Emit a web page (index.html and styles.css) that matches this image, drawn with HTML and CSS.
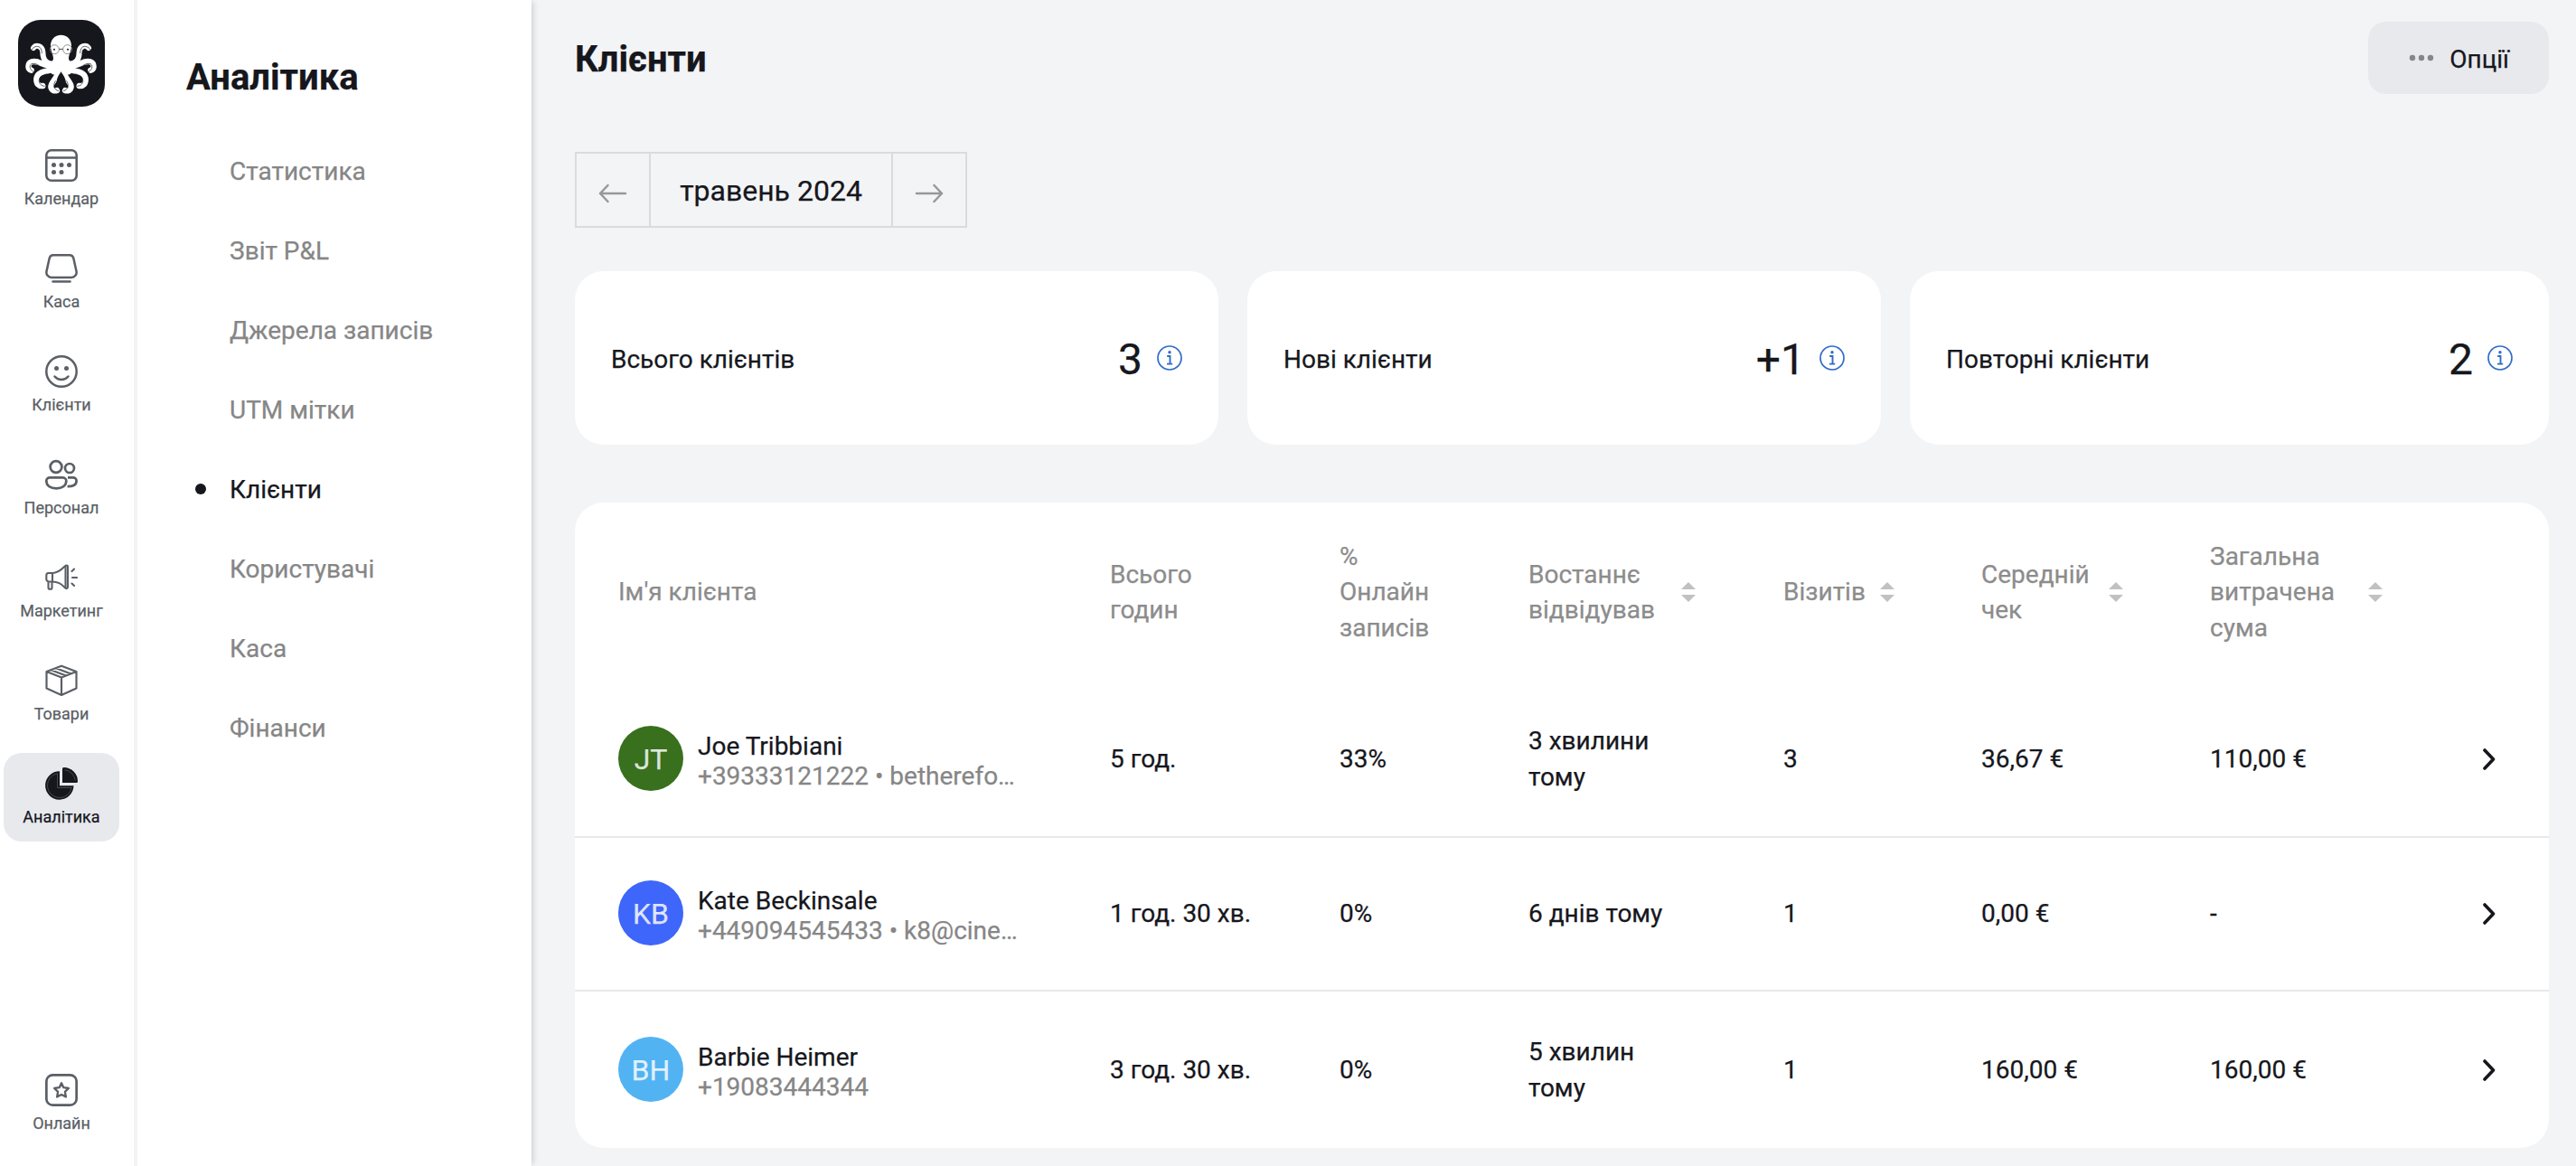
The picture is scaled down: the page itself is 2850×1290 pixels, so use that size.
FILE: index.html
```html
<!DOCTYPE html>
<html lang="uk">
<head>
    <meta charset="UTF-8">
    <meta name="viewport" content="width=device-width, initial-scale=1.0">
    <title>Клієнти - Аналітика</title>
    <link rel="stylesheet" href="styles.css">
</head>
<body>
    <svg class="sprite" aria-hidden="true">
        <symbol id="icon-sort" viewBox="0 0 16 22">
            <path d="M8 0l8 8H0zM8 22l8-8H0z" fill="currentColor"/>
        </symbol>
        <symbol id="icon-info" viewBox="0 0 28 28">
            <circle cx="14" cy="14" r="13" fill="none" stroke="currentColor" stroke-width="1.7"/>
            <circle cx="14" cy="7.8" r="1.7" fill="currentColor"/>
            <path d="M11.2 12h3.3v8.4M11 20.6h6.2" fill="none" stroke="currentColor" stroke-width="1.9"/>
        </symbol>
        <symbol id="icon-chevron" viewBox="0 0 14 24">
            <path d="M2 2l9.5 10L2 22" fill="none" stroke="currentColor" stroke-width="3.6" stroke-linecap="round" stroke-linejoin="round"/>
        </symbol>
        <symbol id="octopus-arms" viewBox="18 18 288 288">
            <g fill="none" stroke="#fff" stroke-width="19" stroke-linecap="round">
                <path d="M140 164C104 166 100 142 100 124C98 104 78 99 69 111" stroke-width="18"/>
                <path d="M140 172C100 174 88 150 64 157C48 163 49 181 62 185"/>
                <path d="M140 182C112 190 84 188 79 212C77 230 87 239 100 237"/>
                <path d="M152 186C150 212 128 222 127 240C128 253 140 255 147 252"/>
            </g>
            <g fill="none" stroke="#16171d" stroke-width="2" stroke-linecap="round">
                <path d="M62 118C70 104 88 102 93 113C96 118 97 124 97 128"/>
                <path d="M68 190C54 180 54 166 66 163C74 162 82 166 88 170"/>
                <path d="M106 238C86 236 84 218 92 208C98 202 106 200 112 198"/>
                <path d="M152 254C134 248 134 232 142 221"/>
            </g>
        </symbol>
    </svg>

    <div class="app">
        <aside class="rail">
            <svg class="logo" viewBox="18 18 288 288">
                <rect x="18" y="18" width="288" height="288" rx="74" fill="#16171d"/>
                <use href="#octopus-arms" x="18" y="18" width="288" height="288"/>
                <use href="#octopus-arms" x="18" y="18" width="288" height="288" transform="matrix(-1 0 0 1 321 0)"/>
                <path d="M160.500 68C182 68 195 84 195 104C195 122 186 132 186 146C187 156 198 160 204 164L192 198L174 202L160.500 189L147 202L130 198L118 164C124 160 134 156 135 146C135 132 126 122 126 104C126 84 139 68 160.500 68Z" fill="#fff"/>
                <path d="M160.500 190C150 206 146 214 146 224L156 250H165L176 224C176 214 171 206 160.500 190Z" fill="#16171d"/>
                <g fill="none" stroke="#16171d" stroke-width="2.4">
                    <circle cx="139" cy="116" r="15" stroke="#777"/>
                    <circle cx="182" cy="116" r="15" stroke="#777"/>
                    <path d="M154 115h13"/>
                </g>
                <circle cx="138" cy="116" r="3" fill="#16171d"/>
                <circle cx="183" cy="116" r="3" fill="#16171d"/>
            </svg>

            <nav class="rail-nav">
                <a class="rail-item">
                    <svg viewBox="0 0 36 36" fill="none" stroke="currentColor" stroke-width="2.6">
                        <rect x="1.3" y="1.3" width="33.4" height="33.4" rx="5.5"/>
                        <path d="M1.500 9.500h33"/>
                        <g fill="currentColor" stroke="none">
                            <circle cx="9.5" cy="17.5" r="2.5"/><circle cx="18" cy="17.5" r="2.5"/><circle cx="26.5" cy="17.5" r="2.5"/>
                            <circle cx="9.5" cy="25.5" r="2.5"/><circle cx="18" cy="25.5" r="2.5"/>
                        </g>
                    </svg>
                    <span>Календар</span>
                </a>
                <a class="rail-item">
                    <svg viewBox="0 0 36 36" fill="none" stroke="currentColor" stroke-width="2.5" stroke-linecap="round">
                        <path d="M9 3.300h18a4.500 4.500 0 0 1 4.300 3.300l3.200 14.500a5.600 5.600 0 0 1-5.400 6.900H6.900a5.600 5.600 0 0 1-5.400-6.900L4.700 6.600A4.500 4.500 0 0 1 9 3.300z"/>
                        <path d="M8.500 32.500h19"/>
                    </svg>
                    <span>Каса</span>
                </a>
                <a class="rail-item">
                    <svg viewBox="0 0 36 36" fill="none" stroke="currentColor" stroke-width="2.5" stroke-linecap="round">
                        <circle cx="18" cy="18" r="16.7"/>
                        <path d="M10.500 23.500c4 4.600 11 4.600 15 0"/>
                        <circle cx="12.5" cy="14.5" r="2.5" fill="currentColor" stroke="none"/>
                        <circle cx="23.5" cy="14.5" r="2.5" fill="currentColor" stroke="none"/>
                    </svg>
                    <span>Клієнти</span>
                </a>
                <a class="rail-item">
                    <svg viewBox="0 0 36 36" fill="none" stroke="currentColor" stroke-width="2.7">
                        <circle cx="12" cy="9.5" r="6.4"/>
                        <circle cx="27" cy="11" r="5"/>
                        <path d="M5.500 21.300h14a3.800 3.800 0 0 1 3.800 3.800c0 5.500-4.500 8.200-11 8.200s-11-2.700-11-8.200a3.800 3.800 0 0 1 4.200-3.800z"/>
                        <path d="M25 21.300h6a3.600 3.600 0 0 1 3.600 3.600c0 4.500-3.600 6.400-10 6.300"/>
                    </svg>
                    <span>Персонал</span>
                </a>
                <a class="rail-item">
                    <svg viewBox="0 0 36 36" fill="none" stroke="currentColor" stroke-width="2.1" stroke-linecap="round" stroke-linejoin="round">
                        <path d="M8 13H3.500A2.500 2.500 0 0 0 1.300 15.500v4A2.800 2.800 0 0 0 4 22.500h4c8 0 11.500 4 14 6.800c1.300 1.400 3 .8 3-1V6c0-1.700-1.700-2-3-.8C18 9.200 14 13 8 13zM8 13v9.500M3.500 22.500v6.700a1.500 1.500 0 0 0 1.500 1.500h1a1.500 1.500 0 0 0 1.500-1.500v-6.700"/>
                        <path d="M22.500 6v22.500"/>
                        <path d="M30 18h5M29.500 11l2.500-2.500M29.500 24.500l2.500 2.500"/>
                    </svg>
                    <span>Маркетинг</span>
                </a>
                <a class="rail-item">
                    <svg viewBox="0 0 36 36" fill="none" stroke="currentColor" stroke-width="2.2" stroke-linejoin="round">
                        <path d="M18 1.800L34.500 8v18.500L18 34L1.500 26.500V8zM1.500 8L18 14.500L34.500 8M18 14.500V34M12 4.200L28.500 10.500M6.500 6.200L23 12.500"/>
                    </svg>
                    <span>Товари</span>
                </a>
                <a class="rail-item active">
                    <svg viewBox="0 0 36 36" fill="currentColor">
                        <path d="M16 4.300v16h15.500A15.700 15.700 0 1 1 16 4.300z"/>
                        <path d="M19 1.500A1.500 1.500 0 0 1 20.500 0A15.500 15.500 0 0 1 36 15.500A1.500 1.500 0 0 1 34.500 17H19z"/>
                        <path d="M13.500 6.800v15.700h15.700M21.500 2.800a13 13 0 0 1 11.700 11.700M13.500 6.800A13.500 13.500 0 1 0 29.200 22.500" fill="none" stroke="#5b5d63" stroke-width="0.7"/>
                    </svg>
                    <span>Аналітика</span>
                </a>
            </nav>

            <a class="rail-item">
                <svg viewBox="0 0 36 36" fill="none" stroke="currentColor" stroke-width="2.7" stroke-linejoin="round">
                    <rect x="1.35" y="1.35" width="33.3" height="33.3" rx="7"/>
                    <path d="M18 10.300l2.300 4.900l5.600.8l-4 3.900l1 5.600L18 22.900l-4.900 2.600l1-5.600l-4-3.900l5.600-.8z" stroke-width="2.3"/>
                </svg>
                <span>Онлайн</span>
            </a>
        </aside>

        <aside class="sidebar">
            <h2>Аналітика</h2>
            <ul>
                <li>Статистика</li>
                <li>Звіт P&amp;L</li>
                <li>Джерела записів</li>
                <li>UTM мітки</li>
                <li class="active">Клієнти</li>
                <li>Користувачі</li>
                <li>Каса</li>
                <li>Фінанси</li>
            </ul>
        </aside>

        <main>
            <header class="page-header">
                <h1>Клієнти</h1>
                <button class="options">
                    <svg viewBox="0 0 30 8"><g fill="currentColor"><circle cx="5" cy="4" r="3.2"/><circle cx="15" cy="4" r="3.2"/><circle cx="25" cy="4" r="3.2"/></g></svg>
                    <span>Опції</span>
                </button>
            </header>

            <div class="month-picker">
                <button>
                    <svg viewBox="0 0 32 22"><path d="M30 11H2M10.500 2L2 11l8.500 9"/></svg>
                </button>
                <div class="month">травень 2024</div>
                <button>
                    <svg viewBox="0 0 32 22"><path d="M2 11h28M21.500 2L30 11l-8.500 9"/></svg>
                </button>
            </div>

            <section class="cards">
                <div class="card">
                    <span class="card-label">Всього клієнтів</span>
                    <span class="card-value">3</span>
                    <svg class="info"><use href="#icon-info"/></svg>
                </div>
                <div class="card">
                    <span class="card-label">Нові клієнти</span>
                    <span class="card-value">+1</span>
                    <svg class="info"><use href="#icon-info"/></svg>
                </div>
                <div class="card">
                    <span class="card-label">Повторні клієнти</span>
                    <span class="card-value">2</span>
                    <svg class="info"><use href="#icon-info"/></svg>
                </div>
            </section>

            <table class="clients">
                <colgroup>
                    <col class="col-name">
                    <col class="col-hours">
                    <col class="col-online">
                    <col class="col-last">
                    <col class="col-visits">
                    <col class="col-avg">
                    <col class="col-total">
                    <col>
                </colgroup>
                <thead>
                    <tr>
                        <th>Ім'я клієнта</th>
                        <th>Всього<br>годин</th>
                        <th>%<br>Онлайн<br>записів</th>
                        <th><div class="sortable sort-last"><span>Востаннє відвідував</span><svg class="sort"><use href="#icon-sort"/></svg></div></th>
                        <th><div class="sortable"><span>Візитів</span><svg class="sort"><use href="#icon-sort"/></svg></div></th>
                        <th><div class="sortable sort-avg"><span>Середній чек</span><svg class="sort"><use href="#icon-sort"/></svg></div></th>
                        <th><div class="sortable sort-total"><span>Загальна витрачена сума</span><svg class="sort"><use href="#icon-sort"/></svg></div></th>
                        <th></th>
                    </tr>
                </thead>
                <tbody>
                    <tr>
                        <td>
                            <div class="client">
                                <div class="avatar green">JT</div>
                                <div class="client-info">
                                    <div>Joe Tribbiani</div>
                                    <div class="contact">+39333121222 • betherefo…</div>
                                </div>
                            </div>
                        </td>
                        <td>5 год.</td>
                        <td>33%</td>
                        <td>3 хвилини<br>тому</td>
                        <td>3</td>
                        <td>36,67 €</td>
                        <td>110,00 €</td>
                        <td><svg class="chevron"><use href="#icon-chevron"/></svg></td>
                    </tr>
                    <tr>
                        <td>
                            <div class="client">
                                <div class="avatar blue">KB</div>
                                <div class="client-info">
                                    <div>Kate Beckinsale</div>
                                    <div class="contact">+449094545433 • k8@cine…</div>
                                </div>
                            </div>
                        </td>
                        <td>1 год. 30 хв.</td>
                        <td>0%</td>
                        <td>6 днів тому</td>
                        <td>1</td>
                        <td>0,00 €</td>
                        <td>-</td>
                        <td><svg class="chevron"><use href="#icon-chevron"/></svg></td>
                    </tr>
                    <tr>
                        <td>
                            <div class="client">
                                <div class="avatar sky">BH</div>
                                <div class="client-info">
                                    <div>Barbie Heimer</div>
                                    <div class="contact">+19083444344</div>
                                </div>
                            </div>
                        </td>
                        <td>3 год. 30 хв.</td>
                        <td>0%</td>
                        <td>5 хвилин<br>тому</td>
                        <td>1</td>
                        <td>160,00 €</td>
                        <td>160,00 €</td>
                        <td><svg class="chevron"><use href="#icon-chevron"/></svg></td>
                    </tr>
                </tbody>
            </table>
        </main>
    </div>
</body>
</html>
```

FILE: styles.css
```css
:root {
    --dark: #16171d;
    --icon: #5b5f66;
    --muted: #868686;
    --bg: #f3f4f6;
    --bg-active: #e8e9ed;
    --line: #dadbde;
}

* {
    box-sizing: border-box;
    margin: 0;
    padding: 0;
}

body {
    font-family: Roboto, sans-serif;
    font-size: 28px;
    line-height: 1.4;
    color: var(--dark);
    background: var(--bg);
    -webkit-text-stroke: 0.25px;
    overflow: hidden;
}

button {
    font: inherit;
    color: inherit;
    background: none;
    border: none;
}

.sprite {
    position: absolute;
    width: 0;
    height: 0;
}

.app {
    display: flex;
    height: 100vh;
}

/* Icon rail */
.rail {
    width: 152px;
    flex: none;
    display: flex;
    flex-direction: column;
    padding: 22px 0 20px 4px;
    background: #fff;
    border-right: 4px solid #f3f3f5;
}

.logo {
    width: 96px;
    height: 96px;
    margin: 0 0 31px 16px;
}

.rail-nav {
    display: flex;
    flex-direction: column;
    gap: 16px;
    flex: 1;
}

.rail-item {
    width: 128px;
    height: 98px;
    padding-top: 16px;
    display: flex;
    flex-direction: column;
    align-items: center;
    gap: 7px;
    border-radius: 20px;
    color: var(--icon);
    font-size: 18px;
    line-height: 24px;
}

.rail-item svg {
    width: 36px;
    height: 36px;
}

.rail-item.active {
    background: var(--bg-active);
    color: var(--dark);
}

/* Section menu */
.sidebar {
    width: 436px;
    flex: none;
    padding: 62px 0 0 54px;
    background: #fff;
    box-shadow: 4px 0 6px -2px rgba(22, 23, 29, 0.16);
}

.sidebar h2 {
    font-size: 40px;
    line-height: 48px;
    margin-bottom: 60px;
}

.sidebar ul {
    list-style: none;
    display: flex;
    flex-direction: column;
    gap: 48px;
}

.sidebar li {
    display: flex;
    align-items: center;
    line-height: 40px;
    padding-left: 48px;
    color: var(--muted);
}

.sidebar li.active {
    padding-left: 10px;
    color: var(--dark);
}

.sidebar li.active::before {
    content: '';
    width: 12px;
    height: 12px;
    margin: 0 26px 2px 0;
    border-radius: 50%;
    background: var(--dark);
}

/* Content */
main {
    flex: 1;
    padding: 24px 30px 0 48px;
}

.page-header {
    display: flex;
    justify-content: space-between;
    align-items: center;
    height: 80px;
    margin-bottom: 64px;
}

.page-header h1 {
    font-size: 40px;
    line-height: 48px;
    padding-top: 4px;
}

.options {
    display: flex;
    align-items: center;
    gap: 16px;
    height: 80px;
    padding: 0 44px;
    border-radius: 20px;
    background: var(--bg-active);
}

.options svg {
    width: 30px;
    height: 8px;
    color: var(--muted);
}

.options span {
    padding-top: 3px;
}

.month-picker {
    display: inline-flex;
    height: 84px;
    margin-bottom: 48px;
    border: 2px solid var(--line);
}

.month-picker button {
    width: 80px;
    padding-top: 7px;
    display: flex;
    align-items: center;
    justify-content: center;
}

.month-picker svg {
    width: 32px;
    height: 22px;
    fill: none;
    stroke: #97989b;
    stroke-width: 2.5;
    stroke-linecap: round;
    stroke-linejoin: round;
}

.month {
    width: 270px;
    font-size: 32px;
    line-height: 82px;
    text-align: center;
    border-left: 2px solid var(--line);
    border-right: 2px solid var(--line);
}

.cards {
    display: grid;
    grid-template-columns: 712fr 701fr 707fr;
    gap: 32px;
    margin-bottom: 64px;
}

.card {
    display: flex;
    align-items: center;
    height: 192px;
    padding: 0 40px;
    border-radius: 32px;
    background: #fff;
}

.card-label {
    flex: 1;
    padding-top: 3px;
}

.card-value {
    padding-top: 4px;
    margin-right: 16px;
    font-size: 48px;
}

.info {
    width: 28px;
    height: 28px;
    color: #2f6bc8;
}

/* Clients table */
.clients {
    width: 100%;
    table-layout: fixed;
    border-spacing: 0;
    border-radius: 32px;
    background: #fff;
}

.col-name { width: 592px; }
.col-hours { width: 254px; }
.col-online { width: 209px; }
.col-last { width: 282px; }
.col-visits { width: 219px; }
.col-avg { width: 253px; }
.col-total { width: 302px; }

.clients th {
    height: 198px;
    text-align: left;
    font-weight: 400;
    color: #8c8c8c;
}

.clients td {
    height: 173px;
    border-bottom: 2px solid #e8e9ed;
}

.clients tr:nth-child(2) td {
    height: 170px;
}

.clients tr:last-child td {
    border-bottom: none;
}

.clients th:first-child,
.clients td:first-child {
    padding-left: 48px;
}

.sortable {
    display: flex;
    align-items: center;
    gap: 16px;
}

.sort-last span { width: 153px; }
.sort-avg span { width: 125px; }
.sort-total span { width: 159px; }

.sort {
    width: 16px;
    height: 22px;
    flex: none;
    color: #c1c1c1;
}

.client {
    display: flex;
    align-items: center;
    gap: 16px;
    padding-bottom: 2px;
}

.client-info {
    line-height: 33px;
    padding-top: 6px;
}

.contact {
    color: var(--muted);
}

.avatar {
    width: 72px;
    height: 72px;
    border-radius: 50%;
    font-size: 32px;
    line-height: 74px;
    text-align: center;
    color: rgba(255, 255, 255, 0.82);
}

.avatar.green { background: #38701d; }
.avatar.blue { background: #3e66fb; }
.avatar.sky { background: #52b3f3; }

.chevron {
    display: block;
    width: 14px;
    height: 24px;
}
```
